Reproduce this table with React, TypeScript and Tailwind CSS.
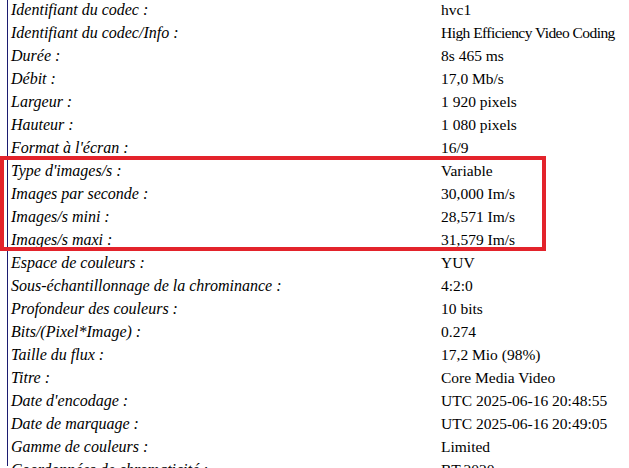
const rows: [string, string][] = [
  ["Identifiant du codec :", "hvc1"],
  ["Identifiant du codec/Info :", "High Efficiency Video Coding"],
  ["Durée :", "8s 465 ms"],
  ["Débit :", "17,0 Mb/s"],
  ["Largeur :", "1 920 pixels"],
  ["Hauteur :", "1 080 pixels"],
  ["Format à l'écran :", "16/9"],
];

const framerate: [string, string][] = [
  ["Type d'images/s :", "Variable"],
  ["Images par seconde :", "30,000 Im/s"],
  ["Images/s mini :", "28,571 Im/s"],
  ["Images/s maxi :", "31,579 Im/s"],
];

const rest: [string, string][] = [
  ["Espace de couleurs :", "YUV"],
  ["Sous-échantillonnage de la chrominance :", "4:2:0"],
  ["Profondeur des couleurs :", "10 bits"],
  ["Bits/(Pixel*Image) :", "0.274"],
  ["Taille du flux :", "17,2 Mio (98%)"],
  ["Titre :", "Core Media Video"],
  ["Date d'encodage :", "UTC 2025-06-16 20:48:55"],
  ["Date de marquage :", "UTC 2025-06-16 20:49:05"],
  ["Gamme de couleurs :", "Limited"],
  ["Coordonnées de chromaticité :", "BT.2020"],
];

function Row({ label, value }: { label: string; value: string }) {
  // long values get squeezed a little so they stay in the window
  const tight = value.length > 24;
  return (
    <div className="grid grid-cols-[430px_1fr] h-[23px] leading-[23px] whitespace-nowrap">
      <span className="italic text-[16px]">{label}</span>
      <span className={tight ? "text-[15.5px] tracking-[-0.55px]" : "text-[15.5px]"}>{value}</span>
    </div>
  );
}

export default function App() {
  return (
    <div className="w-[629px] h-[468px] overflow-hidden bg-white pl-[7px] text-black font-['Liberation_Serif','Times_New_Roman',serif]">
      <div className="h-full border-l border-[#1c1c70] pl-[3px]">
        <div className="-mt-[2px]">
          {rows.map(([l, v]) => (
            <Row key={l} label={l} value={v} />
          ))}
          <div className="relative">
            {framerate.map(([l, v]) => (
              <Row key={l} label={l} value={v} />
            ))}
            <div className="absolute -left-[11px] -top-[3px] w-[546px] h-[95px] border-4 border-[#e3232b] pointer-events-none" />
          </div>
          {rest.map(([l, v]) => (
            <Row key={l} label={l} value={v} />
          ))}
        </div>
      </div>
    </div>
  );
}
